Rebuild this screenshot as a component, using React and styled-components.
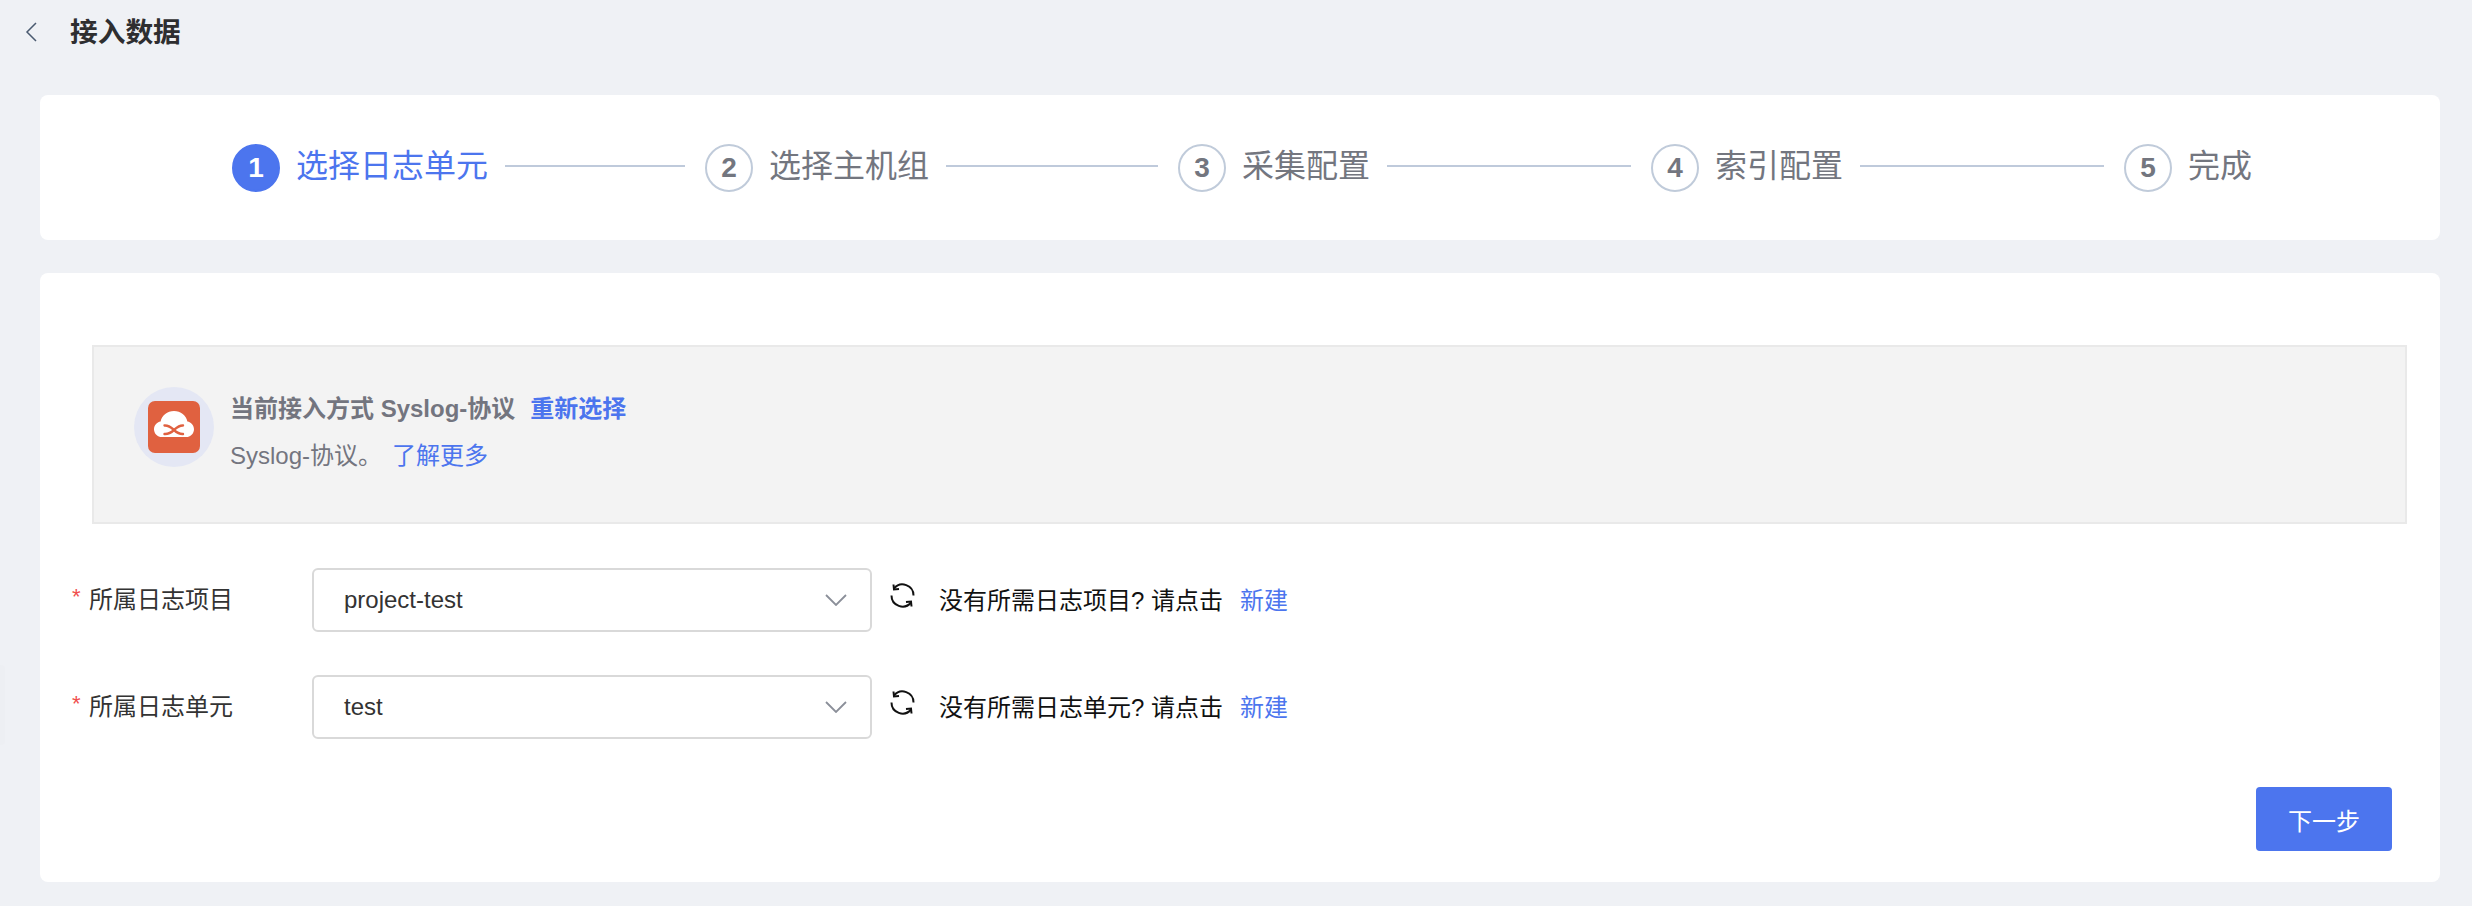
import React from "react";
import styled, { createGlobalStyle } from "styled-components";

const Global = createGlobalStyle`
  html, body { margin: 0; padding: 0; background: #eff1f5; }
  body { font-family: "Liberation Sans", "Noto Sans CJK SC", sans-serif; }
  * { box-sizing: border-box; }
`;

const Page = styled.div`
  position: relative;
  width: 2472px;
  height: 906px;
  overflow: hidden;
  background: #eff1f5;
  padding: 0 32px 0 40px;
  display: flex;
  flex-direction: column;
`;

const EdgeTab = styled.span`
  position: absolute;
  left: 0;
  top: 665px;
  width: 5px;
  height: 80px;
  background: #edeff3;
  border-radius: 0 4px 4px 0;
`;

const Header = styled.header`
  height: 95px;
  margin-left: -40px;
  padding: 0 0 30px 25px;
  display: flex;
  align-items: center;
`;

const BackButton = styled.span`
  display: flex;
  width: 45px;
  margin-bottom: 2px;
  color: #4a5a70;
`;

const Title = styled.h1`
  margin: 0;
  font-size: 27.700px;
  line-height: 36px;
  font-weight: 700;
  color: #2e2e30;
`;

const Card = styled.section`
  background: #fff;
  border-radius: 8px;
`;

const StepsCard = styled(Card)`
  height: 145px;
  padding-left: 4px;
  display: flex;
  align-items: center;
  justify-content: center;
`;

const Step = styled.div`
  width: ${(p) => (p.$last ? "auto" : "473px")};
  display: flex;
  align-items: center;
`;

const StepCircle = styled.span`
  flex: none;
  width: 48px;
  height: 48px;
  border-radius: 50%;
  display: flex;
  align-items: center;
  justify-content: center;
  font-size: 28px;
  font-weight: 700;
  color: ${(p) => (p.$active ? "#fff" : "#73767f")};
  background: ${(p) => (p.$active ? "#4c75ee" : "#fff")};
  border: 2px solid ${(p) => (p.$active ? "#4c75ee" : "#c0cbda")};
`;

const StepLabel = styled.span`
  flex: none;
  margin: 0 0 3px 16px;
  font-size: 32px;
  line-height: 44px;
  color: ${(p) => (p.$active ? "#4c75ee" : "#73767f")};
`;

const StepLine = styled.span`
  flex: 1;
  height: 2px;
  margin: 0 20px 3px 17px;
  background: #bfcadb;
`;

const FormCard = styled(Card)`
  margin-top: 33px;
  height: 609px;
  padding: 72px 33px 0 52px;
`;

const InfoBox = styled.div`
  height: 179px;
  padding: 40px 0 0 40px;
  display: flex;
  align-items: flex-start;
  background: #f3f3f3;
  border: 2px solid #e9e9e9;
`;

const IconHalo = styled.span`
  flex: none;
  width: 80px;
  height: 80px;
  border-radius: 50%;
  background: #e4e7f4;
  display: flex;
  align-items: center;
  justify-content: center;
`;

const InfoText = styled.div`
  margin: -4px 0 0 16px;
  display: flex;
  flex-direction: column;
  gap: 1px;
`;

const InfoLine = styled.div`
  height: 46px;
  display: flex;
  align-items: center;
  font-size: 24px;
  color: #73757f;
  font-weight: ${(p) => (p.$strong ? 700 : 400)};
`;

const Link = styled.a`
  color: #4c75ee;
  margin-left: ${(p) => p.$gap || 0}px;
  font-weight: ${(p) => p.$weight || "inherit"};
`;

const Rows = styled.div`
  margin: 44px 0 0 -32px;
  display: flex;
  flex-direction: column;
  gap: 43px;
`;

const Row = styled.div`
  height: 64px;
  display: flex;
  align-items: center;
`;

const FieldLabel = styled.label`
  width: 252px;
  display: flex;
  align-items: center;
  padding: 0 0 6px 12px;
  font-size: 24px;
  color: #333;
`;

const Star = styled.span`
  color: #f04e4e;
  font-size: 22px;
  width: 17px;
`;

const SelectBox = styled.div`
  width: 560px;
  height: 64px;
  padding: 0 23px 0 30px;
  display: flex;
  align-items: center;
  justify-content: space-between;
  background: #fff;
  border: 2px solid #d9d9d9;
  border-radius: 6px;
  font-size: 24px;
  color: #333;
`;

const Reload = styled.span`
  display: flex;
  margin: 0 23px 8px 18px;
  color: #111;
`;

const Hint = styled.span`
  font-size: 24px;
  margin-bottom: 3px;
  color: #111;
`;

const Footer = styled.div`
  margin: 48px 0 0;
  display: flex;
  justify-content: flex-end;
  padding-right: 15px;
`;

const NextButton = styled.button`
  width: 136px;
  height: 64px;
  border: none;
  border-radius: 4px;
  background: #4c75ee;
  color: #fff;
  font: inherit;
  font-size: 24px;
`;

const steps = ["选择日志单元", "选择主机组", "采集配置", "索引配置", "完成"];

const Chevron = () => (
  <svg width="22" height="12" viewBox="0 0 22 12" fill="none" stroke="#8b8f99" strokeWidth="1.8">
    <path d="M1 1l10 10L21 1" />
  </svg>
);

const Refresh = () => (
  <svg width="26" height="26" viewBox="0 0 26 26" fill="none" stroke="currentColor" strokeWidth="2">
    <path d="M4 5.500A11 11 0 0 1 23.500 12.500" />
    <path d="M1.500 12.500A11 11 0 0 0 21 19.500" />
    <path d="M3.500 1.500L4 6.500l5-.5" />
    <path d="M21.500 23.500L21 18.500l-5 .5" />
  </svg>
);

const SyslogIcon = () => (
  <svg width="52" height="52" viewBox="0 0 52 52">
    <rect width="52" height="52" rx="7" fill="#e06140" />
    <path
      d="M14 36c-4.500 0-8-3.400-8-7.800 0-4 2.800-7.200 6.600-7.800C13.800 14.500 19.300 10 26 10s12.200 4.500 13.400 10.400c3.800.6 6.600 3.800 6.600 7.800 0 4.400-3.500 7.800-8 7.800z"
      fill="#fff"
    />
    <path
      d="M16.500 24.500c4.500-.3 6.500 1.800 9.500 4.500s5 4.300 9 4M16.500 33c4.500.3 6.500-1.300 9.500-4s5-4.800 9-4.500"
      fill="none"
      stroke="#e06140"
      strokeWidth="2.400"
      strokeLinecap="round"
    />
  </svg>
);

const fields = [
  { label: "所属日志项目", value: "project-test", hint: "没有所需日志项目? 请点击" },
  { label: "所属日志单元", value: "test", hint: "没有所需日志单元? 请点击" },
];

export default function App() {
  return (
    <Page>
      <Global />
      <EdgeTab />
      <Header>
        <BackButton>
          <svg width="12" height="20" viewBox="0 0 12 20" fill="none" stroke="currentColor" strokeWidth="1.500">
            <path d="M11 1L2 10l9 9" />
          </svg>
        </BackButton>
        <Title>接入数据</Title>
      </Header>
      <StepsCard>
        {steps.map((s, i) => {
          const last = i === steps.length - 1;
          return (
            <Step key={s} $last={last}>
              <StepCircle $active={i === 0}>{i + 1}</StepCircle>
              <StepLabel $active={i === 0}>{s}</StepLabel>
              {!last && <StepLine />}
            </Step>
          );
        })}
      </StepsCard>
      <FormCard>
        <InfoBox>
          <IconHalo>
            <SyslogIcon />
          </IconHalo>
          <InfoText>
            <InfoLine $strong>
              当前接入方式 Syslog-协议
              <Link $gap={15} $weight={600}>重新选择</Link>
            </InfoLine>
            <InfoLine>
              Syslog-协议。
              <Link $gap={10}>了解更多</Link>
            </InfoLine>
          </InfoText>
        </InfoBox>
        <Rows>
          {fields.map((f) => (
            <Row key={f.label}>
              <FieldLabel>
                <Star>*</Star>
                {f.label}
              </FieldLabel>
              <SelectBox>
                {f.value}
                <Chevron />
              </SelectBox>
              <Reload>
                <Refresh />
              </Reload>
              <Hint>
                {f.hint}
                <Link $gap={17}>新建</Link>
              </Hint>
            </Row>
          ))}
        </Rows>
        <Footer>
          <NextButton>下一步</NextButton>
        </Footer>
      </FormCard>
    </Page>
  );
}
